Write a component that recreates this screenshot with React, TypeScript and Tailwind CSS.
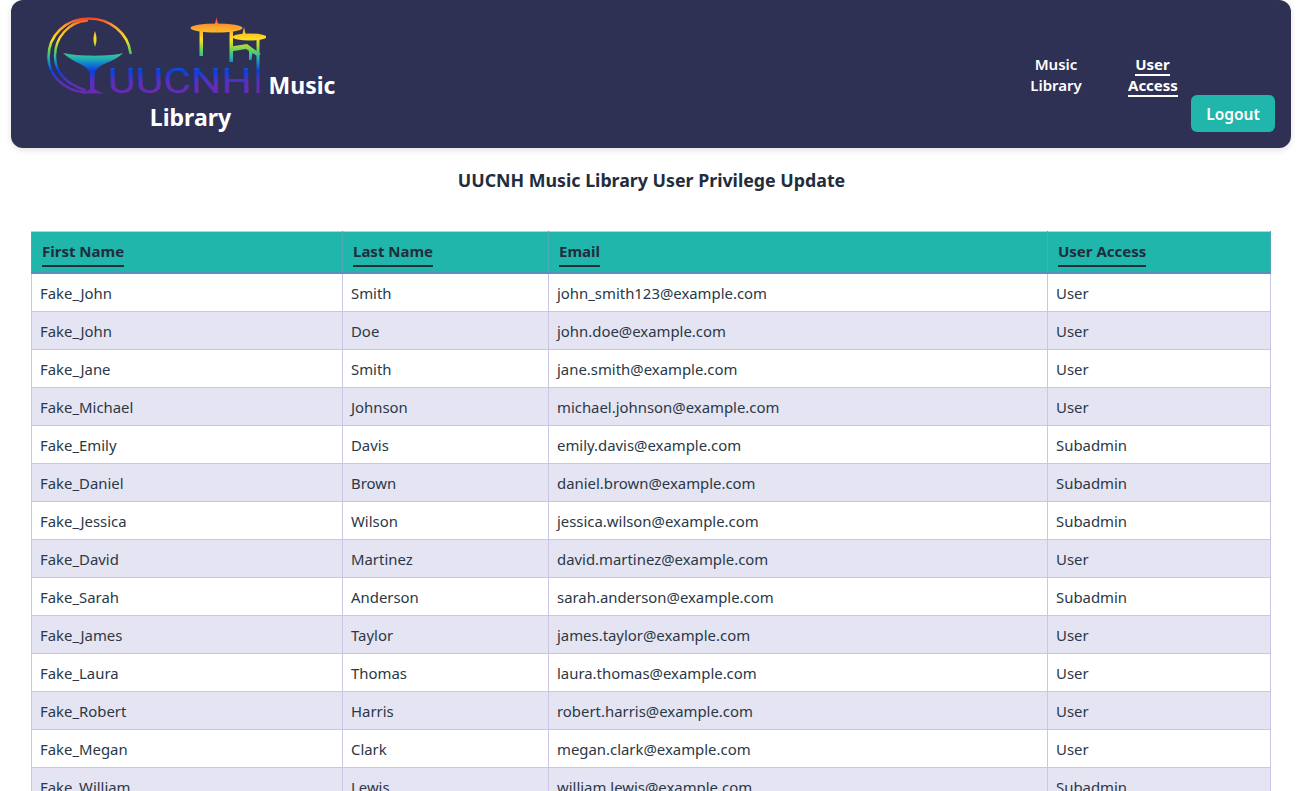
const users = [
  ["Fake_John", "Smith", "john_smith123@example.com", "User"],
  ["Fake_John", "Doe", "john.doe@example.com", "User"],
  ["Fake_Jane", "Smith", "jane.smith@example.com", "User"],
  ["Fake_Michael", "Johnson", "michael.johnson@example.com", "User"],
  ["Fake_Emily", "Davis", "emily.davis@example.com", "Subadmin"],
  ["Fake_Daniel", "Brown", "daniel.brown@example.com", "Subadmin"],
  ["Fake_Jessica", "Wilson", "jessica.wilson@example.com", "Subadmin"],
  ["Fake_David", "Martinez", "david.martinez@example.com", "User"],
  ["Fake_Sarah", "Anderson", "sarah.anderson@example.com", "Subadmin"],
  ["Fake_James", "Taylor", "james.taylor@example.com", "User"],
  ["Fake_Laura", "Thomas", "laura.thomas@example.com", "User"],
  ["Fake_Robert", "Harris", "robert.harris@example.com", "User"],
  ["Fake_Megan", "Clark", "megan.clark@example.com", "User"],
  ["Fake_William", "Lewis", "william.lewis@example.com", "Subadmin"],
];

const columns = ["First Name", "Last Name", "Email", "User Access"];

function Logo() {
  return (
    <svg
      className="inline-block align-baseline w-[220px] h-[79px] -mr-[3px]"
      viewBox="47 15 220 79"
      fill="none"
    >
      <defs>
        <linearGradient id="rainbow" gradientUnits="userSpaceOnUse" x1="0" y1="16" x2="0" y2="94">
          <stop offset="0" stopColor="#f0281e" />
          <stop offset="0.12" stopColor="#fb9a32" />
          <stop offset="0.3" stopColor="#fde01e" />
          <stop offset="0.43" stopColor="#6fd455" />
          <stop offset="0.54" stopColor="#1fb4b4" />
          <stop offset="0.7" stopColor="#0a3fe0" />
          <stop offset="0.85" stopColor="#5a2fc0" />
          <stop offset="1" stopColor="#6a2ab0" />
        </linearGradient>
      </defs>
      <g stroke="url(#rainbow)" strokeLinecap="round">
        {/* chalice rings */}
        <path d="M131.5 53C129 33 111 18.5 90 18.5C66 18.5 49.5 36 49.5 57C49.5 75 64 90 86 92.5" strokeWidth="2.6" />
        <path d="M88 20.5C70 22 56 37 56 56C56 72 67 84 86 90" strokeWidth="2.4" />
      </g>
      <g fill="url(#rainbow)">
        {/* flame */}
        <path d="M96 31C97.5 36 98.5 40 96 47C93.5 40 94.5 36 96 31Z" />
        {/* chalice */}
        <path d="M64 53C76 56 110 57 124 53C120 58 110 62 103 65C98 68 95.5 71 95.5 76L95.5 89C98 91 102 92 105 93.5L83 93.5C86 92 89 91 91 89L91 76C91 71 88 68 83 65C77 62 69 58 64 53Z" />
        {/* letters */}
        <text
          x="109"
          y="93"
          fontFamily="Roboto, sans-serif"
          fontWeight="400"
          fontSize="35"
          textLength="144"
          lengthAdjust="spacingAndGlyphs"
        >
          UUCNH
        </text>
        {/* big roof */}
        <ellipse cx="217.5" cy="28" rx="26" ry="4.5" />
        <path d="M217.5 17L219 24L216 24Z" />
        <rect x="200.5" y="31" width="3.5" height="25" />
        <rect x="230.5" y="31" width="3.5" height="31" />
        {/* small roof */}
        <ellipse cx="250.5" cy="37" rx="17" ry="3.5" />
        <path d="M245 27L246.5 34L243.5 34Z" />
        <rect x="257.5" y="38" width="3" height="55" />
        <path d="M232 46.5L248 44L262 54L258 56L247 49L232 51.5Z" />
        <path d="M250 47L254 49L252.5 60L250 60Z" />
      </g>
    </svg>
  );
}

export default function App() {
  return (
    <div className="h-[791px] overflow-hidden bg-white font-['Noto_Sans',sans-serif] text-[#2a3847]">
      <header className="ml-[11px] mr-[12px] h-[148px] flex items-center rounded-xl bg-[#2e3054] shadow-[0_2px_6px_rgba(0,0,0,0.12)]">
        <a className="ml-[30px] w-[299px] text-center text-[23px] leading-8 font-bold text-white">
          <Logo /> Music
          <br />
          Library
        </a>
        <nav className="ml-auto flex gap-[46px] mr-[14px] pt-[2px] text-[15px] leading-[21px] font-semibold text-center">
          <a className="w-[52px] text-white">Music Library</a>
          <a className="w-[49px] font-bold text-white">
            <span className="border-b-2 border-white">User Access</span>
          </a>
        </nav>
        <button className="self-end mb-4 mr-4 w-[84px] h-[37px] pt-[2px] rounded-md bg-[#20b6ab] text-[15.5px] font-semibold text-white">
          Logout
        </button>
      </header>

      <main className="px-[31px]">
        <h1 className="pt-[19px] h-[83px] text-center text-[17.8px] font-bold leading-[26px] text-[#1f2d3d]">
          UUCNH Music Library User Privilege Update
        </h1>
        <table className="w-[1239px] table-fixed border-collapse text-[14.9px]">
          <colgroup>
            <col className="w-[311px]" />
            <col className="w-[206px]" />
            <col className="w-[499px]" />
            <col className="w-[223px]" />
          </colgroup>
          <thead>
            <tr className="h-[41px] bg-[#20b6ab] border-b-2 border-[#5a8fc0]">
              {columns.map((col) => (
                <th key={col} className="border border-[#c9c7e5] border-x-[#4fa9bc] border-b-0 px-[10px] pt-[5px] text-left text-[15px] leading-[20px] font-bold text-[#1f2d3d]">
                  <span className="inline-block border-b-2 border-[#1f2d3d] pb-[4px]">{col}</span>
                </th>
              ))}
            </tr>
          </thead>
          <tbody>
            {users.map((user, i) => (
              <tr
                key={user[2]}
                className={i === 0 ? "h-[39px] bg-white" : i % 2 === 1 ? "h-[38px] bg-[#e5e4f2]" : "h-[38px] bg-white"}
              >
                {user.map((cell, j) => (
                  <td key={j} className="border border-[#c9c7e5] px-2 pt-[2px]">
                    {cell}
                  </td>
                ))}
              </tr>
            ))}
          </tbody>
        </table>
      </main>
    </div>
  );
}
